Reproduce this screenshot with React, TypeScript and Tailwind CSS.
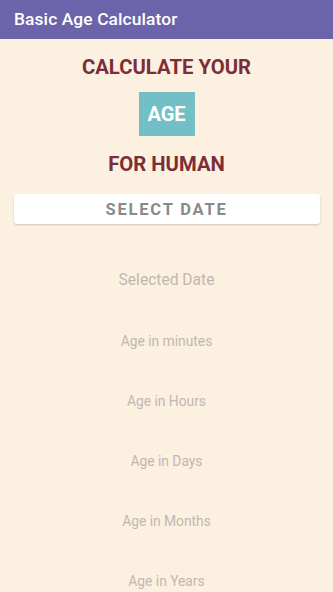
export default function App() {
  const rows = ["Age in minutes", "Age in Hours", "Age in Days", "Age in Months", "Age in Years"];
  return (
    <div className="w-[333px] h-[592px] overflow-hidden bg-[#fcf0e0] font-['Roboto',sans-serif]">
      <header className="h-[39px] bg-[#6c64aa] flex items-center px-[14px]">
        <h1 className="text-white text-[17.4px] font-medium tracking-[0.1px]">Basic Age Calculator</h1>
      </header>
      <div className="flex flex-col items-center">
        <p className="mt-[16px] text-[20.3px] leading-[24px] font-bold text-[#7b2e37]">CALCULATE YOUR</p>
        <div className="mt-[13px] w-[56px] h-[44px] bg-[#73bfc8] flex items-center justify-center">
          <span className="text-white text-[20px] font-bold">AGE</span>
        </div>
        <p className="mt-[16px] text-[20.3px] leading-[24px] font-bold text-[#7b2e37]">FOR HUMAN</p>
        <button className="mt-[18px] w-[306px] h-[30px] pt-[2px] bg-white rounded-[3px] shadow-[0_1px_2px_rgba(0,0,0,0.18)] text-[#8a8a8a] text-[16.5px] font-bold tracking-[1.8px]">
          SELECT DATE
        </button>
        <p className="mt-[46px] text-[15.6px] leading-[20px] text-[#bfb8b1]">Selected Date</p>
        <div className="mt-[42px] flex flex-col items-center gap-[42px]">
          {rows.map((r) => (
            <p key={r} className="text-[13.8px] leading-[18px] text-[#bfb8b1]">{r}</p>
          ))}
        </div>
      </div>
    </div>
  );
}
